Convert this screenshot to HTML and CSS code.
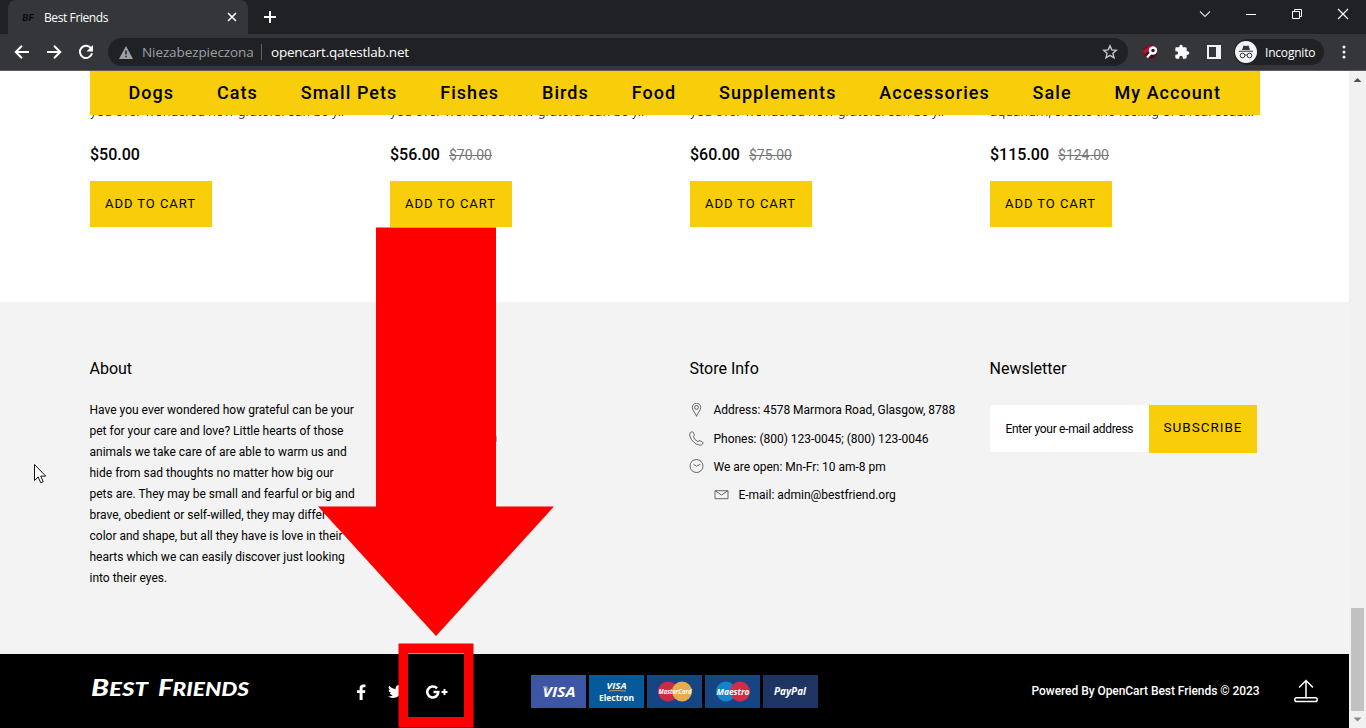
FILE: index.html
```html
<!DOCTYPE html>
<html lang="en">
<head>
<meta charset="utf-8">
<title>Best Friends</title>
<link rel="stylesheet" href="styles.css">
</head>
<body>
<header class="tabs">
  <div class="tab">
    <span class="favicon">BF</span>
    <span class="tab-title">Best Friends</span>
    <svg class="tab-close" width="10" height="10" viewBox="0 0 10 10"><path d="M1 1l8 8M9 1l-8 8" stroke="#fff" stroke-width="1.6"/></svg>
  </div>
  <svg class="new-tab" width="14" height="14" viewBox="0 0 14 14"><path d="M7 1v12M1 7h12" stroke="#fff" stroke-width="2"/></svg>
  <div class="window-controls">
    <svg width="12" height="12" viewBox="0 0 12 12"><path d="M1 3.5l5 5 5-5" fill="none" stroke="#ddd" stroke-width="1.1"/></svg>
    <svg width="12" height="12" viewBox="0 0 12 12"><path d="M1 6.5h10" stroke="#fff"/></svg>
    <svg width="12" height="12" viewBox="0 0 12 12"><path d="M1.5 3.5h7v7h-7zM3.5 3.5v-2h7v7h-2" fill="none" stroke="#fff"/></svg>
    <svg width="12" height="12" viewBox="0 0 12 12"><path d="M1 1l10 10M11 1L1 11" stroke="#fff" stroke-width="1.2"/></svg>
  </div>
</header>
<div class="toolbar">
  <div class="nav-icons">
    <svg width="16" height="16" viewBox="0 0 16 16"><path d="M15 8H2M8 1.8L1.8 8 8 14.2" fill="none" stroke="#fff" stroke-width="2"/></svg>
    <svg width="16" height="16" viewBox="0 0 16 16"><path d="M1 8h13M8 1.8L14.2 8 8 14.2" fill="none" stroke="#fff" stroke-width="2"/></svg>
    <svg width="16" height="16" viewBox="0 0 16 16"><path d="M13.2 4.6A6.1 6.1 0 1 0 14 9.2" fill="none" stroke="#fff" stroke-width="2"/><path d="M15 1v6.5H8.5z" fill="#fff"/></svg>
  </div>
  <div class="address">
    <svg width="14" height="13" viewBox="0 0 14 13"><path d="M7 0l7 13H0z" fill="#9aa0a6"/><path d="M7 4.5v4M7 9.7v1.6" stroke="#202124" stroke-width="1.5"/></svg>
    <span class="insecure">Niezabezpieczona</span>
    <span class="divider"></span>
    <span class="url">opencart.qatestlab.net</span>
    <svg class="star" width="16" height="16" viewBox="0 0 16 16"><path d="M8 1.8l1.8 4.1 4.6.4-3.5 3 1.1 4.5L8 11.4l-4 2.4 1.1-4.5-3.5-3 4.6-.4z" fill="none" stroke="#c4c7ca" stroke-width="1.4"/></svg>
  </div>
  <svg class="ext" width="16" height="16" viewBox="0 0 16 16"><circle cx="8.5" cy="8" r="7" fill="#2b1c22" stroke="#7c1030" stroke-width="1.2"/><path d="M0 8l7-6 5 1-5 5H5L3 10 2 8z" fill="#c8102e"/><path d="M5 13.500l4-4.500" stroke="#fff" stroke-width="2.200"/><circle cx="11" cy="6.500" r="3" fill="none" stroke="#fff" stroke-width="2.400"/></svg>
  <svg class="puzzle" width="16" height="16" viewBox="0 0 24 24"><path d="M20.500 11H19V7a2 2 0 0 0-2-2h-4V3.500a2.500 2.500 0 0 0-5 0V5H4a2 2 0 0 0-2 2v3.800h1.500a2.700 2.700 0 0 1 0 5.400H2V20c0 1.100.9 2 2 2h3.800v-1.500a2.700 2.700 0 0 1 5.400 0V22H17a2 2 0 0 0 2-2v-4h1.500a2.500 2.500 0 0 0 0-5z" fill="#fff"/></svg>
  <svg class="panel" width="14" height="14" viewBox="0 0 14 14"><path d="M1 1h12v12H1z" fill="none" stroke="#f1f3f4" stroke-width="2"/><path d="M9 1h4v12H9z" fill="#f1f3f4"/></svg>
  <div class="profile">
    <svg width="22" height="22" viewBox="0 0 22 22"><circle cx="11" cy="11" r="11" fill="#f1f3f4"/><path d="M7 9l1.500-4.500 2.500.6 2.500-.6L15 9zM4 9.800h14v1H4z" fill="#35363a"/><g fill="none" stroke="#35363a"><circle cx="7.500" cy="14.500" r="2.300"/><circle cx="14.500" cy="14.500" r="2.300"/><path d="M9.800 14.200q1.200-.6 2.400 0"/></g></svg>
    <span>Incognito</span>
  </div>
  <svg class="more" width="4" height="14" viewBox="0 0 4 14"><g fill="#f1f3f4"><circle cx="2" cy="2" r="1.500"/><circle cx="2" cy="7" r="1.500"/><circle cx="2" cy="12" r="1.500"/></g></svg>
</div>
<div class="viewport">
  <main class="page">
    <nav class="menu"><a>Dogs</a><a>Cats</a><a>Small Pets</a><a>Fishes</a><a>Birds</a><a>Food</a><a>Supplements</a><a>Accessories</a><a>Sale</a><a>My Account</a></nav>
    <section class="products">
      <article><p class="desc">you ever wondered how grateful can be y..</p><div class="price"><b>$50.00</b></div><button class="cart">ADD TO CART</button></article>
      <article><p class="desc">you ever wondered how grateful can be y..</p><div class="price"><b>$56.00</b><s>$70.00</s></div><button class="cart">ADD TO CART</button></article>
      <article><p class="desc">you ever wondered how grateful can be y..</p><div class="price"><b>$60.00</b><s>$75.00</s></div><button class="cart">ADD TO CART</button></article>
      <article><p class="desc">aquarium, create the feeling of a real seabi..</p><div class="price"><b>$115.00</b><s>$124.00</s></div><button class="cart">ADD TO CART</button></article>
    </section>
    <section class="info">
      <div><h3>About</h3><p class="about">Have you ever wondered how grateful can be your<br>pet for your care and love? Little hearts of those<br>animals we take care of are able to warm us and<br>hide from sad thoughts no matter how big our<br>pets are. They may be small and fearful or big and<br>brave, obedient or self-willed, they may differ in<br>color and shape, but all they have is love in their<br>hearts which we can easily discover just looking<br>into their eyes.</p></div>
      <div class="links"><span>n</span></div>
      <div><h3>Store Info</h3>
        <ul class="contacts">
          <li><svg width="15" height="15" viewBox="0 0 15 15"><path d="M7.500 13.300C6.500 10 3.300 7.500 3.300 4.400a4.200 4.200 0 0 1 8.400 0C11.700 7.500 8.500 10 7.500 13.300z"/><circle cx="7.500" cy="4.400" r="1.900"/></svg><span>Address: 4578 Marmora Road, Glasgow, 8788</span></li>
          <li><svg width="15" height="15" viewBox="0 0 15 15"><path d="M1.300 1.700L3 .8Q4 .6 4.500 1.800L5.400 4Q5.500 4.900 4.300 5.600 5.500 9 9 10.700 10 9.300 11 9.700L13.500 11Q14.600 11.800 13.800 12.800 12.500 14.600 10.400 14.100 3.500 12.500.8 5 .2 2.900 1.300 1.700z"/></svg><span>Phones: (800) 123-0045; (800) 123-0046</span></li>
          <li><svg width="15" height="15" viewBox="0 0 15 15"><circle cx="7.500" cy="7" r="6.500"/><path d="M4.500 5.300l3 1.900 4-2"/></svg><span>We are open: Mn-Fr: 10 am-8 pm</span></li>
          <li class="mail"><svg width="15" height="15" viewBox="0 0 15 15"><path d="M1 2.700h13v8H1zM1.500 3l6 4 6-4"/></svg><span>E-mail: admin@bestfriend.org</span></li>
        </ul>
      </div>
      <div><h3>Newsletter</h3><div class="signup"><span class="email">Enter your e-mail address</span><button>SUBSCRIBE</button></div></div>
    </section>
    <footer class="bottom">
      <div class="logo"><svg width="162" height="34" viewBox="0 0 162 34"><text x="1" y="22" textLength="57" lengthAdjust="spacingAndGlyphs">B<tspan>EST</tspan></text><text x="68" y="22" textLength="91" lengthAdjust="spacingAndGlyphs">F<tspan>RIENDS</tspan></text></svg></div>
      <div class="social">
        <svg width="10" height="16" viewBox="0 0 10 16"><path d="M9.500.7v2.500H8c-1.100 0-1.400.5-1.400 1.300v1.700h2.800L9 9H6.600v7H3.600V9H1V6.200h2.600V4C3.600 1.700 5 .5 7.200.5c1 0 1.900.1 2.300.2z" fill="#fff"/></svg>
        <svg width="16" height="13" viewBox="0 0 16 13"><path d="M15.500 1.500q-.6 1-1.500 1.600C14.200 8.500 10 13 4.900 13 3.100 13 1.400 12.500 0 11.600q2.700.2 4.700-1.400-2.200-.2-3-2.200.7.100 1.400-.1Q.6 7.100.6 4.700q.7.400 1.400.4Q-.2 3.200 1.100.8q2.600 3.200 6.600 3.400C7.200 1.700 8.700 0 10.800 0q1.400 0 2.400 1l2-.8q-.3 1.200-1.400 1.800z" fill="#fff"/></svg>
        <svg width="22" height="14" viewBox="0 0 22 14"><path d="M11 3.400A5.500 5.500 0 1 0 12.300 7H7.500" fill="none" stroke="#fff" stroke-width="2.600"/><path d="M18.500 4v6M15.500 7h6" stroke="#fff" stroke-width="2"/></svg>
      </div>
      <div class="cards">
        <svg width="55" height="33" viewBox="0 0 55 33"><rect width="55" height="33" fill="#3d55a5"/><text x="28" y="22" class="visa" font-size="14" textLength="33" lengthAdjust="spacingAndGlyphs">VISA</text><path d="M11 11.500h5l1.500 4z" fill="#c9a0a8"/></svg>
        <svg width="55" height="33" viewBox="0 0 55 33"><rect width="55" height="33" fill="#055a9c"/><text x="27.500" y="13.500" class="visa" font-size="9" textLength="20" lengthAdjust="spacingAndGlyphs">VISA</text><path d="M20 16q8-1 17 0" fill="none" stroke="#b79a68"/><text x="27.500" y="26" class="electron" textLength="35" lengthAdjust="spacingAndGlyphs">Electron</text></svg>
        <svg width="55" height="33" viewBox="0 0 55 33"><rect width="55" height="33" fill="#154583"/><circle cx="21" cy="16.500" r="10" fill="#cf2944"/><circle cx="35" cy="16.500" r="10" fill="#e8ad4b"/><text x="28" y="19.200" class="brand" font-size="7" textLength="33" lengthAdjust="spacingAndGlyphs">MasterCard</text></svg>
        <svg width="55" height="33" viewBox="0 0 55 33"><rect width="55" height="33" fill="#154583"/><circle cx="21" cy="16.500" r="10" fill="#1585ca"/><circle cx="35" cy="16.500" r="10" fill="#d52b45"/><text x="28" y="19.500" class="brand" font-size="9" textLength="33" lengthAdjust="spacingAndGlyphs">Maestro</text></svg>
        <svg width="55" height="33" viewBox="0 0 55 33"><rect width="55" height="33" fill="#1e3564"/><text x="27" y="19.500" class="brand" font-size="10" textLength="32" lengthAdjust="spacingAndGlyphs">PayPal</text></svg>
      </div>
      <div class="copyright">Powered By OpenCart Best Friends © 2023</div>
      <svg class="to-top" width="26" height="24" viewBox="0 0 26 24"><g fill="none" stroke="#fff" stroke-width="1.500" stroke-linecap="round"><path d="M13 18.500V1.500M6.500 8L13 1.500 19.500 8"/><rect x="1.800" y="18.800" width="22.400" height="3.700" rx="1.800"/></g></svg>
    </footer>
  </main>
  <aside class="scrollbar">
    <svg width="17" height="17" viewBox="0 0 17 17"><path d="M4.500 11h8l-4-4z" fill="#505050"/></svg>
    <div class="track"><div class="thumb"></div></div>
    <svg width="17" height="17" viewBox="0 0 17 17"><path d="M4.500 6.500h8l-4 4z" fill="#8b8b8b"/></svg>
  </aside>
</div>
<svg class="annotation" width="1366" height="728" viewBox="0 0 1366 728">
  <path d="M376 227.500h120v279h58L436 636 318 506.500h58z" fill="#f00"/>
  <path d="M398.500 643.500h75v84h-75zM408 653.500v63.500h56v-63.500z" fill="#f00" fill-rule="evenodd"/>
  <path d="M34.500 464.500v16l3.700-3.500 2.500 5.700 2.500-1.100-2.500-5.500h5z" fill="#fff" stroke="#111"/>
</svg>
</body>
</html>
```
FILE: styles.css
```css
* { box-sizing: border-box; }
body { margin: 0; width: 1366px; height: 728px; overflow: hidden; position: relative; display: flex; flex-direction: column; font-family: Roboto, sans-serif; color: #000; background: #fff; }
svg { display: block; flex: none; }
h3, p, ul { margin: 0; padding: 0; }
button { border: 0; border-radius: 0; background: #f8ce0b; font-family: Roboto, sans-serif; color: #000; padding: 0; }

.tabs { height: 34px; flex: none; background: #202124; display: flex; align-items: flex-start; padding-left: 8px; }
.tab { width: 240px; height: 34px; background: #35363a; border-radius: 8px 8px 0 0; display: flex; align-items: center; padding: 0 12px; color: #fff; font: 12px "Open Sans", sans-serif; }
.favicon { width: 16px; margin-right: 8px; color: #0a0a0a; font: italic 900 10px Lato, sans-serif; text-align: center; }
.tab-title { letter-spacing: -0.4px; }
.tab-close { margin-left: auto; margin-right: -1px; }
.new-tab { margin: 10px 0 0 15px; }
.window-controls { margin-left: auto; display: flex; gap: 34px; padding: 8px 17px 0 0; }

.toolbar { height: 37px; flex: none; background: #35363a; border-bottom: 1px solid #5b5b60; display: flex; align-items: center; font: 13px "Open Sans", sans-serif; color: #fff; }
.nav-icons { display: flex; gap: 16px; padding: 0 14px; }
.address { width: 1020px; height: 28px; border-radius: 14px; background: #202124; display: flex; align-items: center; padding: 0 10px 0 11px; }
.insecure { color: #9aa0a6; margin-left: 9px; width: 112px; font-size: 13.500px; letter-spacing: -0.09px; white-space: nowrap; }
.divider { width: 1px; height: 16px; background: #5f6368; margin: 0 9px 0 7px; }
.url { font-size: 13.500px; letter-spacing: -0.23px; }
.star { margin-left: auto; }
.ext { margin-left: 14px; }
.puzzle { margin-left: 16px; }
.panel { margin-left: 17px; }
.profile { margin-left: 13px; width: 90px; height: 26px; border-radius: 13px; background: #202124; display: flex; align-items: center; gap: 8px; padding-left: 1px; font-size: 12px; letter-spacing: -0.2px; }
.more { margin-left: 18px; }

.viewport { flex: 1; display: flex; min-height: 0; }
.page { width: 1349px; display: flex; flex-direction: column; }
.menu { flex: none; position: relative; z-index: 1; width: 1170px; height: 44px; margin-left: 90px; background: #f8ce0b; display: flex; justify-content: space-between; align-items: center; padding: 0 39px 2px 38.500px; font-size: 18px; font-weight: 500; letter-spacing: 1.05px; white-space: nowrap; }
.products { flex: none; height: 187px; display: grid; grid-template-columns: repeat(4, 300px); padding-left: 90px; align-content: start; }
.desc { height: 20px; margin-top: -14px; font-size: 14px; font-weight: 300; line-height: 20px; letter-spacing: -0.03px; white-space: nowrap; }
.price { height: 60px; padding-top: 23px; display: flex; align-items: baseline; gap: 9px; line-height: 21px; font-size: 16px; }
.price b { font-weight: 500; }
.price s { font-size: 14px; color: #777; font-weight: 400; }
.cart { display: block; width: 122px; height: 46px; padding: 0 1px 2px 0; font-size: 13px; letter-spacing: 0.95px; }

.info { flex: none; height: 352px; background: #f3f3f3; display: grid; grid-template-columns: repeat(4, 300px); padding: 56px 0 0 90px; font-size: 12px; }
.info h3 { font-size: 16px; line-height: 22px; font-weight: 400; margin-left: -0.5px; }
.about { margin: 20px 0 0 -0.5px; line-height: 21px; white-space: nowrap; }
.links { padding: 73px 0 0 100.500px; color: #246; }
.contacts { list-style: none; margin-top: 16px; white-space: nowrap; }
.contacts li { height: 28.400px; display: flex; align-items: center; gap: 9.500px; }
.contacts svg { fill: none; stroke: #444; stroke-width: .8; margin-left: -1px; }
.contacts span { letter-spacing: -0.02px; }
.contacts .mail { padding-left: 25px; }
.signup { display: flex; margin-top: 25px; height: 48px; }
.email { width: 159px; height: 47px; background: #fff; padding-left: 15.500px; line-height: 48px; letter-spacing: -0.3px; white-space: nowrap; }
.signup button { width: 108px; height: 48px; padding-bottom: 4px; font-size: 13.500px; letter-spacing: 1px; }

.bottom { flex: none; height: 74px; background: #000; color: #fff; display: flex; align-items: center; padding-left: 90px; }
.logo { width: 266px; }
.logo text { fill: #fff; font: italic 900 23px Lato, sans-serif; }
.logo tspan { font-size: 19px; }
.social { width: 175px; display: flex; align-items: center; gap: 22px; padding-top: 1px; }
.cards { display: flex; gap: 3px; width: 500px; }
.cards text { fill: #fff; text-anchor: middle; font-family: "Open Sans", sans-serif; }
.visa, .brand { font-style: italic; font-weight: 700; }
.electron { font-size: 9px; font-weight: 700; }
.copyright { width: 229px; padding-left: 0.5px; font-size: 12px; font-weight: 500; letter-spacing: -0.05px; white-space: nowrap; }
.to-top { margin-left: 33px; }

.scrollbar { width: 17px; background: #f1f1f1; display: flex; flex-direction: column; }
.track { flex: 1; display: flex; flex-direction: column; justify-content: flex-end; align-items: center; }
.thumb { width: 13px; height: 103px; background: #c1c1c1; }
.annotation { position: absolute; left: 0; top: 0; pointer-events: none; }
```
